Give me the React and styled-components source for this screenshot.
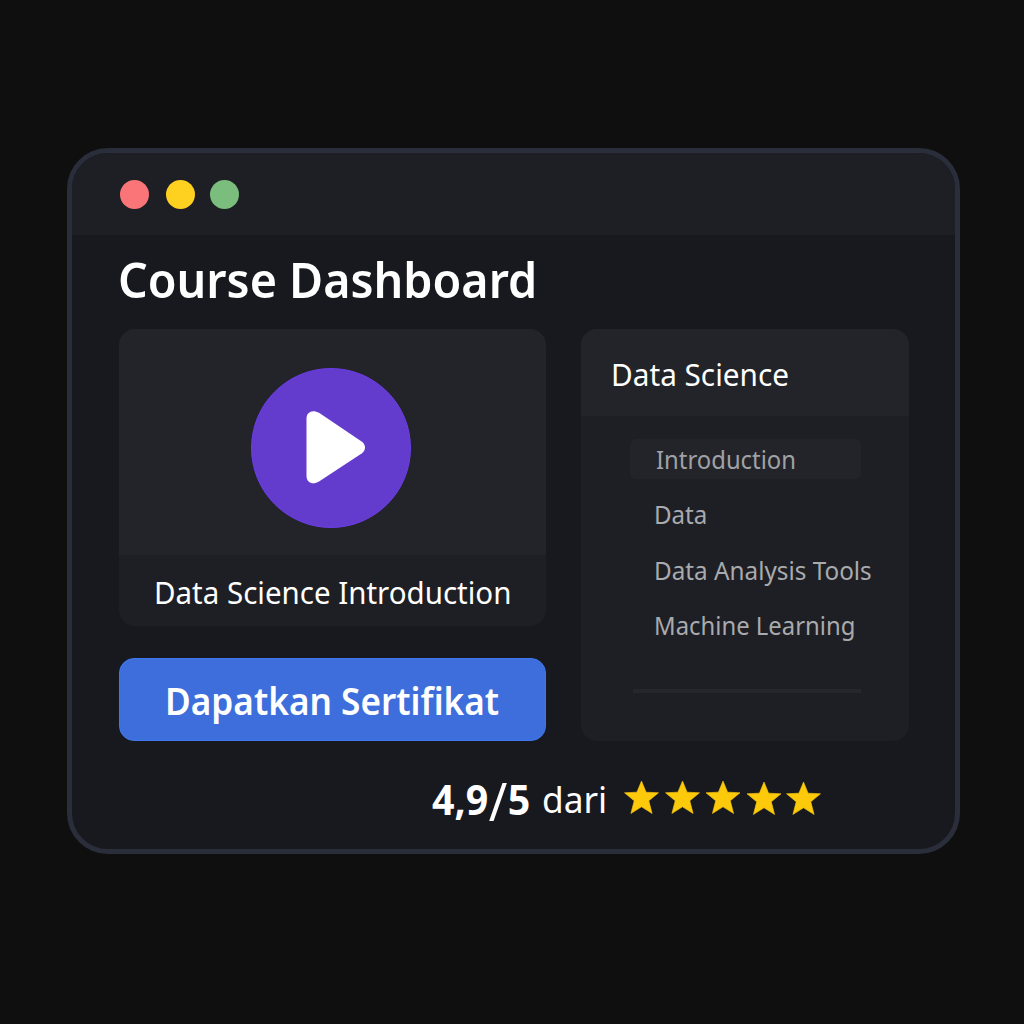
import React from "react";
import styled, { createGlobalStyle } from "styled-components";

const Global = createGlobalStyle`
  * { box-sizing: border-box; }
  html, body { margin: 0; background: #0f0f10; }
  body { font-family: "Noto Sans", "Open Sans", sans-serif; color: #fff; }
  h1, h2, p, ul { margin: 0; padding: 0; }
`;

const Page = styled.main`
  width: 1024px;
  height: 1024px;
  padding: 148px 0 0 67px;
  background: #0f0f10;
  overflow: hidden;
`;

const Window = styled.section`
  width: 893px;
  height: 706px;
  border: 5px solid #2a2d3a;
  border-radius: 41px;
  background: #18191f;
  overflow: hidden;
`;

const TitleBar = styled.header`
  display: flex;
  align-items: center;
  height: 82px;
  padding: 1px 0 0 48px;
  background: #1e1f25;
`;

const Dot = styled.span`
  width: 29px;
  height: 29px;
  margin-right: ${(p) => p.$gap}px;
  border-radius: 50%;
  background: ${(p) => p.$color};
`;

const Text = styled.span`
  display: block;
  width: max-content;
  white-space: nowrap;
  font-size: ${(p) => p.$size}px;
  font-weight: ${(p) => p.$weight || 400};
  font-variant-ligatures: none;
  line-height: ${(p) => p.$line}px;
  transform: scaleX(${(p) => p.$stretch || 1});
  transform-origin: 0 50%;
`;

const Body = styled.div`
  padding: 0 45px 0 46.5px;
`;

const Heading = styled.h1`
  height: 94px;
  padding-top: 10px;
  margin-left: -1px;
`;

const Columns = styled.div`
  display: grid;
  grid-template-columns: 427.5px 328px;
  column-gap: 35.4px;
  height: 412px;
`;

const Main = styled.div`
  display: flex;
  flex-direction: column;
  justify-content: space-between;
`;

const Card = styled.article`
  height: ${(p) => p.$height}px;
  border-radius: 16px;
  background: #1e1f24;
  overflow: hidden;
`;

const Video = styled.div`
  display: flex;
  justify-content: center;
  height: 226px;
  padding: 38.5px 2px 0 0;
  background: #232429;
`;

const Play = styled.button`
  display: block;
  width: 160px;
  height: 160px;
  padding: 0;
  border: 1px solid #6a3ee6;
  border-radius: 50%;
  background: #633ccd;
`;

const Caption = styled.div`
  padding: 13px 0 0 35px;
`;

const Cta = styled.button`
  height: 83px;
  padding: 0 0 0 45.5px;
  border: 1px solid #3f78ec;
  border-radius: 15px;
  background: #3d6edb;
  color: #fff;
  font-family: inherit;
  text-align: left;
`;

const PanelHead = styled.div`
  height: 87px;
  padding: 23px 0 0 29.5px;
  background: #232429;
`;

const Lessons = styled.ul`
  display: flex;
  flex-direction: column;
  gap: 15.4px;
  padding: 23px 0 0 49px;
  list-style: none;
`;

const Lesson = styled.li`
  width: 231px;
  height: 40px;
  padding-left: ${(p) => p.$indent}px;
  border-radius: 6px;
  background: ${(p) => (p.$active ? "#232429" : "transparent")};
  color: ${(p) => (p.$active ? "#a0a1a6" : "#a9aaae")};
`;

const Divider = styled.div`
  width: 228px;
  height: 4px;
  margin: 43.8px 0 0 52px;
  background: #26272c;
`;

const Rating = styled.footer`
  display: flex;
  height: 60px;
  padding: 28px 0 0 313px;
`;

const Score = styled.div`
  width: 110px;
  padding-top: 1.5px;
`;

const Slash = styled.span`
  margin: 0 0.5px;
  font-size: 52px;
  font-weight: 400;
  line-height: 0;
  vertical-align: -6px;
`;

const From = styled.div`
  width: 81px;
  padding-top: 1px;
`;

const Stars = styled.svg`
  display: block;
  width: 200px;
  height: 38px;
  margin-top: 9px;
`;

const lessons = [
  { label: "Introduction", indent: 25.5, stretch: 0.935, active: true },
  { label: "Data", indent: 23.5, stretch: 0.945 },
  { label: "Data Analysis Tools", indent: 23.5, stretch: 0.952 },
  { label: "Machine Learning", indent: 24, stretch: 0.936 },
];

const stars = [[18.5, 0], [59.5, 0], [100, 0], [141, 1], [180.5, 1]];

export default function App() {
  return (
    <Page>
      <Global />
      <Window>
        <TitleBar>
          <Dot $color="#fa7578" $gap={17} />
          <Dot $color="#fed01f" $gap={15} />
          <Dot $color="#7bbd7c" $gap={0} />
        </TitleBar>
        <Body>
          <Heading>
            <Text $size={49.5} $weight={600} $line={68} $stretch={0.943}>Course Dashboard</Text>
          </Heading>
          <Columns>
            <Main>
              <Card $height={297}>
                <Video>
                  <Play aria-label="Play">
                    <svg width="158" height="158" viewBox="0 0 158 158">
                      <path
                        d="M54.500 49.500C54.500 43 60.500 40 67 43.800L110 72.700C114 76 114 81 110 84.200L67 112.600C60.500 116.500 54.500 113.500 54.500 107Z"
                        fill="#fff"
                      />
                    </svg>
                  </Play>
                </Video>
                <Caption>
                  <Text $size={30.5} $line={48} $stretch={0.967}>Data Science Introduction</Text>
                </Caption>
              </Card>
              <Cta>
                <Text $size={38} $weight={600} $line={80} $stretch={0.926}>Dapatkan Sertifikat</Text>
              </Cta>
            </Main>
            <Card $height={412}>
              <PanelHead>
                <Text $size={30.5} $line={44} $stretch={0.975}>Data Science</Text>
              </PanelHead>
              <Lessons>
                {lessons.map((l) => (
                  <Lesson key={l.label} $indent={l.indent} $active={l.active}>
                    <Text $size={25.5} $line={40} $stretch={l.stretch}>{l.label}</Text>
                  </Lesson>
                ))}
              </Lessons>
              <Divider />
            </Card>
          </Columns>
          <Rating>
            <Score>
              <Text $size={41} $weight={700} $line={56} $stretch={0.96}>
                4,9<Slash>/</Slash>5
              </Text>
            </Score>
            <From>
              <Text $size={36} $line={60} $stretch={0.98}>dari</Text>
            </From>
            <Stars viewBox="0 0 200 38">
              {stars.map(([x, y]) => (
                <path
                  key={x}
                  transform={`translate(${x} ${y})`}
                  d="M0 3L4.600 14.200L17 14.800L7.300 22.800L10.600 35.500L0 28.800L-10.600 35.500L-7.300 22.800L-17 14.800L-4.600 14.200Z"
                  fill="#fdc90b"
                  stroke="#fdc90b"
                  strokeWidth="0.600"
                  strokeLinejoin="round"
                />
              ))}
            </Stars>
          </Rating>
        </Body>
      </Window>
    </Page>
  );
}
